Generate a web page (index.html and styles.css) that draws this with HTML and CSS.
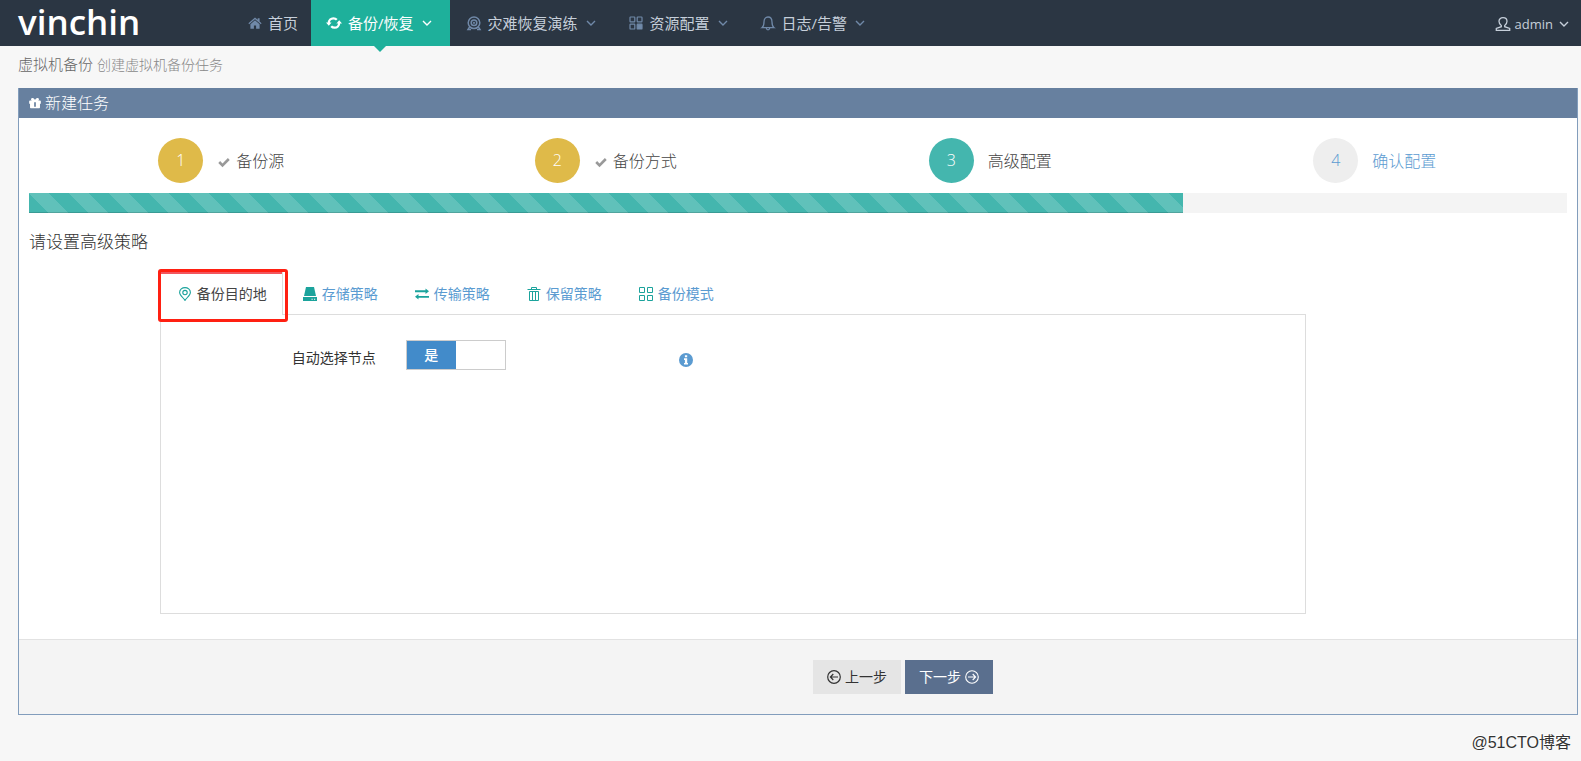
FILE: index.html
```html
<!DOCTYPE html>
<html lang="zh-CN">
<head>
<meta charset="utf-8">
<meta name="viewport" content="width=device-width, initial-scale=1">
<title>虚拟机备份</title>
<link rel="stylesheet" href="styles.css">
</head>
<body>
<svg class="sprite" aria-hidden="true">
  <symbol id="chevron" viewBox="0 0 10 10"><path d="M1 3l4 4 4-4" fill="none" stroke="currentColor" stroke-width="1.4"/></symbol>
</svg>
<header class="topbar">
  <a class="logo" href="#">vinchin</a>
  <nav class="nav">
    <a class="nav-item" href="#">
      <svg class="icon" viewBox="0 0 16 16" fill="currentColor"><path d="M8 2.500L1.400 8.200l.8 1L8 4.200l5.800 5 .8-1-2-1.800V3.200h-1.900v1.600z"/><path d="M8 5.300L3.400 9.200v4.600h3.500v-3.400h2.200v3.400h3.500V9.200z"/></svg>
      <span>首页</span>
    </a>
    <a class="nav-item active" href="#" aria-current="page">
      <svg class="icon" viewBox="0 0 16 16" fill="none" stroke="currentColor" stroke-width="2.200"><path d="M2.800 8.500C2.600 4.800 5 3.300 7.400 3.300c1.600 0 2.600.6 3.400 1.500"/><path d="M13.200 7.500c.2 3.700-2.200 5.200-4.600 5.200-1.600 0-2.600-.6-3.400-1.500"/><path d="M0 7.400h5.600l-2.800 3.400zM16 8.600h-5.600l2.800-3.400z" fill="currentColor" stroke="none"/></svg>
      <span>备份/恢复</span>
      <svg class="chevron"><use href="#chevron"/></svg>
    </a>
    <a class="nav-item" href="#">
      <svg class="icon" viewBox="0 0 16 16" fill="none" stroke="currentColor" stroke-width="1.500"><circle cx="8" cy="7.800" r="5.800"/><circle cx="8" cy="7.800" r="2.800"/><circle cx="8" cy="7.800" r=".4" fill="currentColor"/><path d="M3.800 11.600L2 14.400h3M12.200 11.600l1.800 2.800h-3"/></svg>
      <span>灾难恢复演练</span>
      <svg class="chevron"><use href="#chevron"/></svg>
    </a>
    <a class="nav-item" href="#">
      <svg class="icon" viewBox="0 0 16 16" fill="none" stroke="currentColor" stroke-width="1.200"><rect x="2" y="2" width="4.800" height="4.800" rx=".6"/><rect x="9.200" y="2" width="4.800" height="4.800" rx=".6"/><rect x="2" y="9.200" width="4.800" height="4.800" rx=".6"/><rect x="9.200" y="9.200" width="4.800" height="4.800" rx=".6" fill="currentColor"/></svg>
      <span>资源配置</span>
      <svg class="chevron"><use href="#chevron"/></svg>
    </a>
    <a class="nav-item" href="#">
      <svg class="icon" viewBox="0 0 16 16" fill="none" stroke="currentColor" stroke-width="1.300"><path d="M2 12.700c1.600-1.200 2-2.700 2-5.700 0-3 1.500-5 4-5s4 2 4 5c0 3 .4 4.500 2 5.700z"/><path d="M6.300 13c.2 1.400.8 1.900 1.700 1.900s1.500-.5 1.700-1.900"/></svg>
      <span>日志/告警</span>
      <svg class="chevron"><use href="#chevron"/></svg>
    </a>
  </nav>
  <button class="user" type="button">
    <svg class="icon" viewBox="0 0 16 16" fill="none" stroke="currentColor" stroke-width="1.300"><path d="M6.300 9.500C4.700 8.500 4 7 4 5.300 4 3.200 5.500 1.700 8 1.700s4 1.500 4 3.600c0 1.700-.7 3.200-2.300 4.200v1.200l5 1.700v1.900H1.300v-1.900l5-1.700z"/></svg>
    <span>admin</span>
    <svg class="chevron"><use href="#chevron"/></svg>
  </button>
</header>

<main class="page">
  <h1 class="page-title">虚拟机备份 <small>创建虚拟机备份任务</small></h1>

  <section class="panel">
    <h2 class="panel-title">
      <svg class="gift" viewBox="0 0 14 14" fill="currentColor"><path fill-rule="evenodd" d="M1.200 4h2C1.500 2.800 2.500.8 4.300 1.100 5.600 1.300 6.400 2.500 7 3.400c.6-.9 1.400-2.100 2.700-2.300 1.800-.3 2.800 1.700 1.100 2.900h2c.7 0 1 .4 1 1v3h-1v4.200c0 .6-.4.800-.8.800H2c-.5 0-.8-.3-.8-.8V8h-1V5c0-.6.300-1 1-1zM6 6v5.500h2V6z"/></svg>
      新建任务
    </h2>

    <div class="panel-body">
      <ol class="steps">
        <li class="step done"><a href="#"><span class="number">1</span><svg class="check" viewBox="0 0 12 12"><path d="M1.200 6l3.300 3.300L10.800 3" fill="none" stroke="currentColor" stroke-width="2.600"/></svg>备份源</a></li>
        <li class="step done"><a href="#"><span class="number">2</span><svg class="check" viewBox="0 0 12 12"><path d="M1.200 6l3.300 3.300L10.800 3" fill="none" stroke="currentColor" stroke-width="2.600"/></svg>备份方式</a></li>
        <li class="step current"><a href="#" aria-current="step"><span class="number">3</span>高级配置</a></li>
        <li class="step"><a href="#"><span class="number">4</span>确认配置</a></li>
      </ol>

      <div class="progress" role="progressbar" aria-label="进度" aria-valuenow="75" aria-valuemin="0" aria-valuemax="100">
        <div class="progress-bar" style="width: 75%"></div>
      </div>

      <h3 class="section-title">请设置高级策略</h3>

      <div class="columns">
        <div class="settings">
          <div class="tabs" role="tablist">
            <button class="tab selected" type="button" role="tab" aria-selected="true">
              <svg class="tab-icon" viewBox="0 0 14 14" fill="none" stroke="currentColor" stroke-width="1.100"><path d="M7 13.400C5.500 11 1.600 8 1.600 5.400 1.600 2.600 4.200.6 7 .6s5.400 2 5.400 4.800C12.400 8 8.500 11 7 13.400z"/><circle cx="7" cy="5.600" r="2.200"/></svg>
              备份目的地
            </button>
            <button class="tab" type="button" role="tab" aria-selected="false">
              <svg class="tab-icon" viewBox="0 0 14 14" fill="currentColor"><path d="M3 0h8l2 9H1z"/><path fill-rule="evenodd" d="M0 10h14v4H0zM8.500 11.800v1h1.200v-1zM11 11.800v1h1.200v-1z"/></svg>
              存储策略
            </button>
            <button class="tab" type="button" role="tab" aria-selected="false">
              <svg class="tab-icon" viewBox="0 0 14 14" fill="currentColor"><path d="M0 3.300h10.500V1.400L14 4.200l-3.500 2.700V5.200H0zM14 8.900H3.500V7L0 9.800l3.500 2.800v-1.800H14z"/></svg>
              传输策略
            </button>
            <button class="tab" type="button" role="tab" aria-selected="false">
              <svg class="tab-icon" viewBox="0 0 14 14" fill="none" stroke="currentColor"><path d="M.5 2.500h13M4.500 2.500v-2h5v2M2.500 4.500v9h9v-9zM5.500 5v8M8.500 5v8"/></svg>
              保留策略
            </button>
            <button class="tab" type="button" role="tab" aria-selected="false">
              <svg class="tab-icon" viewBox="0 0 14 14" fill="none" stroke="currentColor"><path d="M.5.500h5v5h-5zM8.500.5h5v5h-5zM.5 8.500h5v5h-5zM8.500 8.500h5v5h-5z"/></svg>
              备份模式
            </button>
            <span class="highlight"></span>
          </div>
          <div class="tab-panel" role="tabpanel">
            <label class="field-label" for="auto-node">自动选择节点</label>
            <span class="switch">
              <input id="auto-node" type="checkbox" role="switch" checked>
              <span class="switch-on">是</span>
            </span>
            <svg class="info" viewBox="0 0 14 14" role="img" aria-label="说明"><circle cx="7" cy="7" r="7" fill="#5b9bd1"/><path d="M5.900 2.200h2.300v2H5.900zM5 5.300h3.200v4.600H9v1.600H5V9.900h.9V6.900H5z" fill="#fff"/></svg>
          </div>
        </div>
      </div>
    </div>

    <div class="panel-footer columns">
      <div class="actions">
        <button class="btn" type="button">
          <svg class="tab-icon" viewBox="0 0 14 14" fill="none" stroke="currentColor" stroke-width="1.200"><circle cx="7" cy="7" r="6.300"/><path d="M11 7H3.500M6.300 4L3.400 7l2.900 3"/></svg>
          上一步
        </button>
        <button class="btn primary" type="button">
          下一步
          <svg class="tab-icon" viewBox="0 0 14 14" fill="none" stroke="currentColor" stroke-width="1.100"><circle cx="7" cy="7" r="6.300"/><path d="M3 7h7.500M7.700 4l2.900 3-2.900 3"/></svg>
        </button>
      </div>
    </div>
  </section>
</main>
<footer class="watermark">@51CTO博客</footer>
</body>
</html>
```
FILE: styles.css
```css
* { box-sizing: border-box; }

body {
  margin: 0;
  background: #f7f7f7;
  color: #333;
  font: 300 14px/20px "Open Sans", "Noto Sans CJK SC", sans-serif;
}

a { color: inherit; text-decoration: none; }

button {
  border: 0;
  background: none;
  font: inherit;
  color: inherit;
  cursor: pointer;
}

.sprite { display: none; }
.icon { width: 16px; height: 16px; flex: none; }
.chevron { width: 10px; height: 10px; flex: none; }

/* Top bar */
.topbar {
  display: flex;
  height: 46px;
  background: #2b3643;
}

.logo {
  width: 233px;
  padding-left: 18px;
  color: #fff;
  font: 600 35px/44px "Open Sans", sans-serif;
}

.nav { display: flex; gap: 1px; }

.nav-item {
  position: relative;
  display: flex;
  align-items: center;
  padding: 0 16px 0 15px;
  color: #c6cfda;
  font-size: 15px;
  font-weight: 400;
}

.nav-item:first-child { padding: 0 12px 0 14px; }
.nav-item .icon { margin-right: 6px; color: #7089a8; }
.nav-item:first-child .icon { margin-right: 5px; }
.nav-item .chevron { margin-left: 8px; color: #7089a8; }
.nav-item.active { background: #1eb09b; }
.nav-item.active,
.nav-item.active .icon,
.nav-item.active .chevron { color: #fff; }
.nav-item.active { padding-right: 18px; }

.nav-item.active::after {
  content: "";
  position: absolute;
  top: 100%;
  left: 50%;
  margin-left: -6px;
  border: 6px solid transparent;
  border-top-color: #1eb09b;
  border-bottom: 0;
}

.user {
  display: flex;
  align-items: center;
  gap: 4px;
  margin-left: auto;
  padding: 2px 12px 0 0;
  color: #c6cfda;
  font-size: 13px;
  font-weight: 400;
}

.user .chevron { margin-left: 2px; }

/* Page */
.page { padding: 8px 3px 0 18px; }

.page-title {
  margin: 0 0 13px;
  color: #666;
  font-size: 15px;
  font-weight: 300;
  line-height: 20px;
}

.page-title small { color: #888; font-size: 14px; }

.panel {
  border: 1px solid #829dbc;
  background: #fff;
}

.panel-title {
  display: flex;
  align-items: center;
  gap: 4px;
  height: 30px;
  margin: -1px 0 0;
  padding-left: 10px;
  background: #67809f;
  color: #fff;
  font-size: 16px;
  font-weight: 300;
}

.gift { width: 12px; height: 12px; }

.panel-body { padding: 20px 10px 25px; }

/* Steps */
.steps {
  display: grid;
  grid-template-columns: repeat(4, 1fr);
  margin: 0 0 10px;
  padding: 0;
  list-style: none;
}

.step {
  display: flex;
  justify-content: center;
  color: #5b9bd1;
  font-size: 16px;
}

.step a { display: flex; align-items: center; }

.number {
  width: 45px;
  margin-right: 14px;
  border-radius: 50%;
  background: #eee;
  line-height: 45px;
  text-align: center;
}

.done, .current { color: #444; }
.done .number { background: #dfba49; color: #fff; }
.current .number { background: #44b6ae; color: #fff; }
.check { width: 12px; height: 12px; margin: 2px 6px 0 1px; color: #999; }

.progress { height: 20px; background: #f4f4f4; }

.progress-bar {
  height: 100%;
  background: #44b6ae linear-gradient(45deg, rgba(255, 255, 255, .15) 25%, transparent 25%, transparent 50%, rgba(255, 255, 255, .15) 50%, rgba(255, 255, 255, .15) 75%, transparent 75%) 0 0 / 40px 40px;
  box-shadow: inset 0 -1px 0 rgba(0, 0, 0, .15);
}

.section-title {
  margin: 17px 0;
  font-size: 17px;
  font-weight: 300;
  line-height: 24px;
}

/* Twelve-column layout */
.columns {
  display: grid;
  grid-template-columns: repeat(12, 1fr);
  column-gap: 30px;
}

.settings { grid-column: 2 / span 9; }
.actions { grid-column: 7 / span 6; display: flex; gap: 4px; }

/* Tabs */
.tabs { position: relative; display: flex; gap: 2px; }

.tab {
  display: flex;
  align-items: center;
  gap: 5px;
  height: 43px;
  padding: 2px 17px 0 18px;
  color: #5b9bd1;
  font-weight: 400;
}

.tab-icon { width: 14px; height: 14px; }
.tab .tab-icon { color: #1ba39c; }

.tab.selected {
  margin-bottom: -1px;
  height: 44px;
  padding: 2px 15px 1px 17px;
  border: solid #ddd;
  border-width: 0 1px;
  background: #fff;
  color: #444;
  z-index: 1;
  box-shadow: inset 0 3px 0 #f3565d;
}

.highlight {
  position: absolute;
  z-index: 2;
  inset: -2px auto -8px -2px;
  width: 130px;
  border: 3px solid #ff2012;
  border-radius: 3px;
  pointer-events: none;
}

.tab-panel {
  display: flex;
  align-items: flex-start;
  min-height: 300px;
  padding: 25px 131px;
  border: 1px solid #ddd;
}

.field-label { margin-top: 8px; font-weight: 400; }

.switch {
  position: relative;
  display: flex;
  width: 100px;
  height: 30px;
  margin-left: 30px;
  border: 1px solid #ccc;
}

.switch input { position: absolute; inset: 0; width: 100%; height: 100%; margin: 0; opacity: 0; }

.switch-on {
  width: 50%;
  background: #428bca;
  color: #fff;
  font-weight: 500;
  line-height: 28px;
  text-align: center;
}

.info { width: 14px; height: 14px; margin: 13px 0 0 173px; }

/* Footer */
.panel-footer {
  padding: 20px 10px;
  border-top: 1px solid #e2e2e2;
  background: #f4f4f4;
}

.btn {
  display: flex;
  align-items: center;
  gap: 4px;
  height: 34px;
  padding: 0 14px;
  background: #e5e5e5;
  font-weight: 400;
}

.btn.primary { background: #5a6f8e; color: #fff; }

.watermark {
  padding: 16px 10px 0 0;
  color: #333;
  font: 400 16px/24px "Liberation Sans", "Noto Sans CJK SC", sans-serif;
  text-align: right;
  text-shadow: -1px -1px 0 #fff;
}
```
